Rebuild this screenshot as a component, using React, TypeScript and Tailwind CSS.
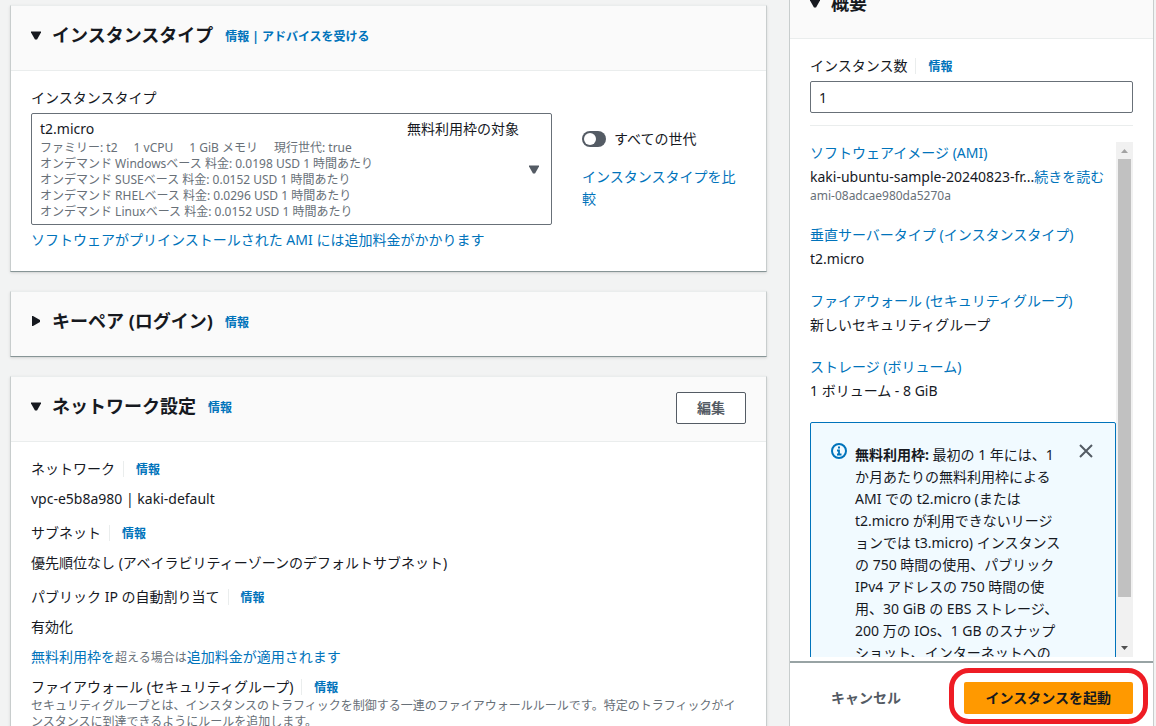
import { useState } from 'react';
import type { ReactNode } from 'react';

const PRICES = [
  'オンデマンド Windowsベース 料金: 0.0198 USD 1 時間あたり',
  'オンデマンド SUSEベース 料金: 0.0152 USD 1 時間あたり',
  'オンデマンド RHELベース 料金: 0.0296 USD 1 時間あたり',
  'オンデマンド Linuxベース 料金: 0.0152 USD 1 時間あたり',
];

function Caret({ open = true }: { open?: boolean }) {
  return (
    <svg width="10" height="10" viewBox="0 0 10 10" className="shrink-0" fill="currentColor" aria-hidden="true">
      {open ? <path d="M0 1.5h10v1L6 9.5H4L0 2.5z" /> : <path d="M1 0h1l7 4v2l-7 4H1z" />}
    </svg>
  );
}

function InfoLink({ children = '情報' }: { children?: ReactNode }) {
  return (
    <a href="#" className="text-xs font-bold text-[#0073bb]">
      {children}
    </a>
  );
}

function FieldLabel({ htmlFor, children }: { htmlFor?: string; children: ReactNode }) {
  return (
    <div className="flex h-[22px] items-center">
      {htmlFor ? <label htmlFor={htmlFor}>{children}</label> : <span>{children}</span>}
      <span className="ml-2 h-4 w-px bg-[#eaeded]" />
      <span className="ml-3 flex pt-0.5">
        <InfoLink />
      </span>
    </div>
  );
}

type SectionProps = {
  title: string;
  info: ReactNode;
  initialOpen?: boolean;
  action?: ReactNode;
  children?: ReactNode;
};

function Section({ title, info, initialOpen = true, action, children }: SectionProps) {
  const [open, setOpen] = useState(initialOpen);

  return (
    <section className="shrink-0 border border-t-[#eaeded] border-r-[#c8cdcd] border-b-[#879596] border-l-[#c8cdcd] bg-white shadow-sm">
      <div className="flex h-16 items-start justify-between bg-[#fafafa] px-5">
        <div className="flex items-center pt-[18px]">
          <button
            type="button"
            aria-expanded={open}
            onClick={() => setOpen(!open)}
            className="flex items-center gap-[11px] text-lg leading-[22px] font-bold"
          >
            <Caret open={open} />
            {title}
          </button>
          <span className="ml-3 flex pt-1">{info}</span>
        </div>
        {action}
      </div>
      {open && children && <div className="border-t border-[#eaeded] px-5 pt-4 pb-5">{children}</div>}
    </section>
  );
}

function InstanceType() {
  const [allGenerations, setAllGenerations] = useState(false);

  return (
    <div className="grid grid-cols-[minmax(0,1fr)_164px] gap-[30px]">
      <div>
        <div id="type-label">インスタンスタイプ</div>
        <button
          type="button"
          aria-haspopup="listbox"
          aria-labelledby="type-label"
          className="mt-1 flex w-full items-center rounded-xs border border-[#687078] bg-white py-1 pr-3 pl-2 text-left"
        >
          <span className="min-w-0 flex-1">
            <span className="flex justify-between">
              <span>t2.micro</span>
              <span>無料利用枠の対象</span>
            </span>
            <span className="flex gap-4 text-xs text-[#687078]">
              <span>ファミリー: t2</span>
              <span>1 vCPU</span>
              <span>1 GiB メモリ</span>
              <span>現行世代: true</span>
            </span>
            {PRICES.map((price) => (
              <span key={price} className="block text-xs text-[#687078]">
                {price}
              </span>
            ))}
          </span>
          <span className="ml-[10px] text-[#545b64]">
            <Caret />
          </span>
        </button>
        <a href="#" className="mt-1 block text-[#0073bb]">
          ソフトウェアがプリインストールされた AMI には追加料金がかかります
        </a>
      </div>
      <div className="pt-[41px]">
        <label className="flex items-center gap-2">
          <input
            type="checkbox"
            role="switch"
            checked={allGenerations}
            onChange={(e) => setAllGenerations(e.target.checked)}
            className="flex h-4 w-6 appearance-none items-center rounded-full bg-[#545b64] px-0.5 before:size-3 before:rounded-full before:bg-white checked:justify-end checked:bg-[#0073bb]"
          />
          すべての世代
        </label>
        <a href="#" className="mt-4 block text-[#0073bb]">
          インスタンスタイプを比較
        </a>
      </div>
    </div>
  );
}

function NetworkSettings() {
  return (
    <div>
      <FieldLabel>ネットワーク</FieldLabel>
      <p className="mt-2">vpc-e5b8a980 | kaki-default</p>
      <div className="mt-3">
        <FieldLabel>サブネット</FieldLabel>
      </div>
      <p className="mt-2">優先順位なし (アベイラビリティーゾーンのデフォルトサブネット)</p>
      <div className="mt-3">
        <FieldLabel>パブリック IP の自動割り当て</FieldLabel>
      </div>
      <p className="mt-2">有効化</p>
      <p className="mt-2 text-[#0073bb]">
        <a href="#">無料利用枠を</a>
        <span className="text-xs text-[#687078]">超える場合は</span>
        <a href="#">追加料金が適用されます</a>
      </p>
      <div className="mt-2">
        <FieldLabel>ファイアウォール (セキュリティグループ)</FieldLabel>
      </div>
      <p className="text-xs text-[#687078]">
        セキュリティグループとは、インスタンスのトラフィックを制御する一連のファイアウォールルールです。特定のトラフィックがインスタンスに到達できるようにルールを追加します。
      </p>
    </div>
  );
}

function SummaryItem({ title, children }: { title: string; children: ReactNode }) {
  return (
    <div className="mb-5">
      <a href="#" className="mb-0.5 block text-[#0073bb]">
        {title}
      </a>
      {children}
    </div>
  );
}

function FreeTierNotice({ onClose }: { onClose: () => void }) {
  return (
    <div className="flex items-start rounded-xs border border-[#0073bb] bg-[#f1faff] px-5 py-5">
      <svg width="16" height="16" viewBox="0 0 16 16" fill="none" stroke="#0073bb" strokeWidth="2" className="shrink-0" aria-hidden="true">
        <circle cx="8" cy="8" r="7" />
        <path d="M6 7.5h2V11M6 11.5h4.5M7 4.5h2" strokeWidth="1.8" />
      </svg>
      <p className="ml-2 w-[206px] pt-px [line-break:loose]">
        <b>無料利用枠:</b> 最初の 1 年には、1 か月あたりの無料利用枠による AMI での t2.micro (または t2.micro
        が利用できないリージョンでは t3.micro) インスタンスの 750 時間の使用、パブリック IPv4 アドレスの 750
        時間の使用、30 GiB の EBS ストレージ、200 万の IOs、1 GB のスナップショット、インターネットへの 100 GB の帯域幅が含まれます。
      </p>
      <button type="button" aria-label="閉じる" onClick={onClose} className="ml-auto text-[#545b64]">
        <svg width="16" height="16" viewBox="0 0 16 16" fill="none" stroke="currentColor" strokeWidth="2">
          <path d="M1 2l12 12M13 2L1 14" />
        </svg>
      </button>
    </div>
  );
}

function ScrollTrack() {
  return (
    <div className="flex w-[17px] shrink-0 flex-col items-center bg-[#f1f1f1]" aria-hidden="true">
      <svg width="17" height="17" viewBox="0 0 17 17" fill="#a3a3a3" className="shrink-0">
        <path d="M5 11h7L8.5 7z" />
      </svg>
      <div className="w-[13px] flex-[438] bg-[#c1c1c1]" />
      <div className="flex-[43]" />
      <svg width="17" height="17" viewBox="0 0 17 17" fill="#505050" className="shrink-0">
        <path d="M5 6h7L8.5 10z" />
      </svg>
    </div>
  );
}

function Summary() {
  const [count, setCount] = useState('1');
  const [notice, setNotice] = useState(true);

  return (
    <aside className="flex min-h-0 flex-col border-x border-[#c8cdcd] bg-white">
      <div className="-mt-[26px] h-16 shrink-0 bg-[#fafafa] px-5 pt-[18px]">
        <button type="button" aria-expanded="true" className="flex items-center gap-[11px] text-lg leading-[22px] font-bold">
          <Caret />
          概要
        </button>
      </div>
      <div className="flex min-h-0 flex-1 flex-col border-t border-b-2 border-t-[#eaeded] border-b-[#98a3a4] px-5 pt-4 pb-1">
        <FieldLabel htmlFor="count">インスタンス数</FieldLabel>
        <input
          id="count"
          type="text"
          value={count}
          onChange={(e) => setCount(e.target.value)}
          className="mt-1 h-8 w-full shrink-0 rounded-xs border border-[#687078] bg-white px-2"
        />
        <hr className="mt-3 mb-4 border-[#eaeded]" />
        <div className="flex min-h-0 flex-1">
          <div className="min-w-0 flex-1 overflow-hidden">
            <SummaryItem title="ソフトウェアイメージ (AMI)">
              <p className="whitespace-nowrap">
                kaki-ubuntu-sample-20240823-fr...
                <a href="#" className="text-[#0073bb]">
                  続きを読む
                </a>
              </p>
              <p className="text-xs text-[#687078]">ami-08adcae980da5270a</p>
            </SummaryItem>
            <SummaryItem title="垂直サーバータイプ (インスタンスタイプ)">
              <p>t2.micro</p>
            </SummaryItem>
            <SummaryItem title="ファイアウォール (セキュリティグループ)">
              <p>新しいセキュリティグループ</p>
            </SummaryItem>
            <SummaryItem title="ストレージ (ボリューム)">
              <p>1 ボリューム - 8 GiB</p>
            </SummaryItem>
            {notice && <FreeTierNotice onClose={() => setNotice(false)} />}
          </div>
          <ScrollTrack />
        </div>
      </div>
      <div className="flex shrink-0 items-center justify-between px-5 pt-[19px] pb-3">
        <button type="button" className="h-8 px-[21px] font-bold text-[#545b64]">
          キャンセル
        </button>
        <div className="relative flex">
          <button type="button" className="h-8 rounded-xs bg-[#ff9900] px-[22px] font-bold">
            インスタンスを起動
          </button>
          <div className="pointer-events-none absolute -inset-x-[15px] -top-[14px] -bottom-[10px] rounded-[20px] border-[5px] border-[#ee1c24]" />
        </div>
      </div>
    </aside>
  );
}

export default function App() {
  return (
    <div
      lang="ja"
      className="grid h-screen grid-cols-[minmax(0,1fr)_365px] grid-rows-[minmax(0,1fr)] gap-[22px] overflow-hidden bg-[#f2f3f3] pr-0.5 pl-[10px] font-['Noto_Sans','Noto_Sans_CJK_JP',sans-serif] text-sm leading-[22px] text-[#16191f] [&_.text-xs]:leading-4"
    >
      <main className="flex min-h-0 flex-col gap-[19px] pt-[5px]">
        <Section
          title="インスタンスタイプ"
          info={
            <span className="flex gap-[3px] text-xs font-bold text-[#0073bb]">
              <InfoLink />|<InfoLink>アドバイスを受ける</InfoLink>
            </span>
          }
        >
          <InstanceType />
        </Section>
        <Section title="キーペア (ログイン)" info={<InfoLink />} initialOpen={false} />
        <Section
          title="ネットワーク設定"
          info={<InfoLink />}
          action={
            <button
              type="button"
              className="mt-[15px] h-8 rounded-xs border border-[#545b64] bg-white px-5 font-bold text-[#545b64]"
            >
              編集
            </button>
          }
        >
          <NetworkSettings />
        </Section>
      </main>
      <Summary />
    </div>
  );
}
